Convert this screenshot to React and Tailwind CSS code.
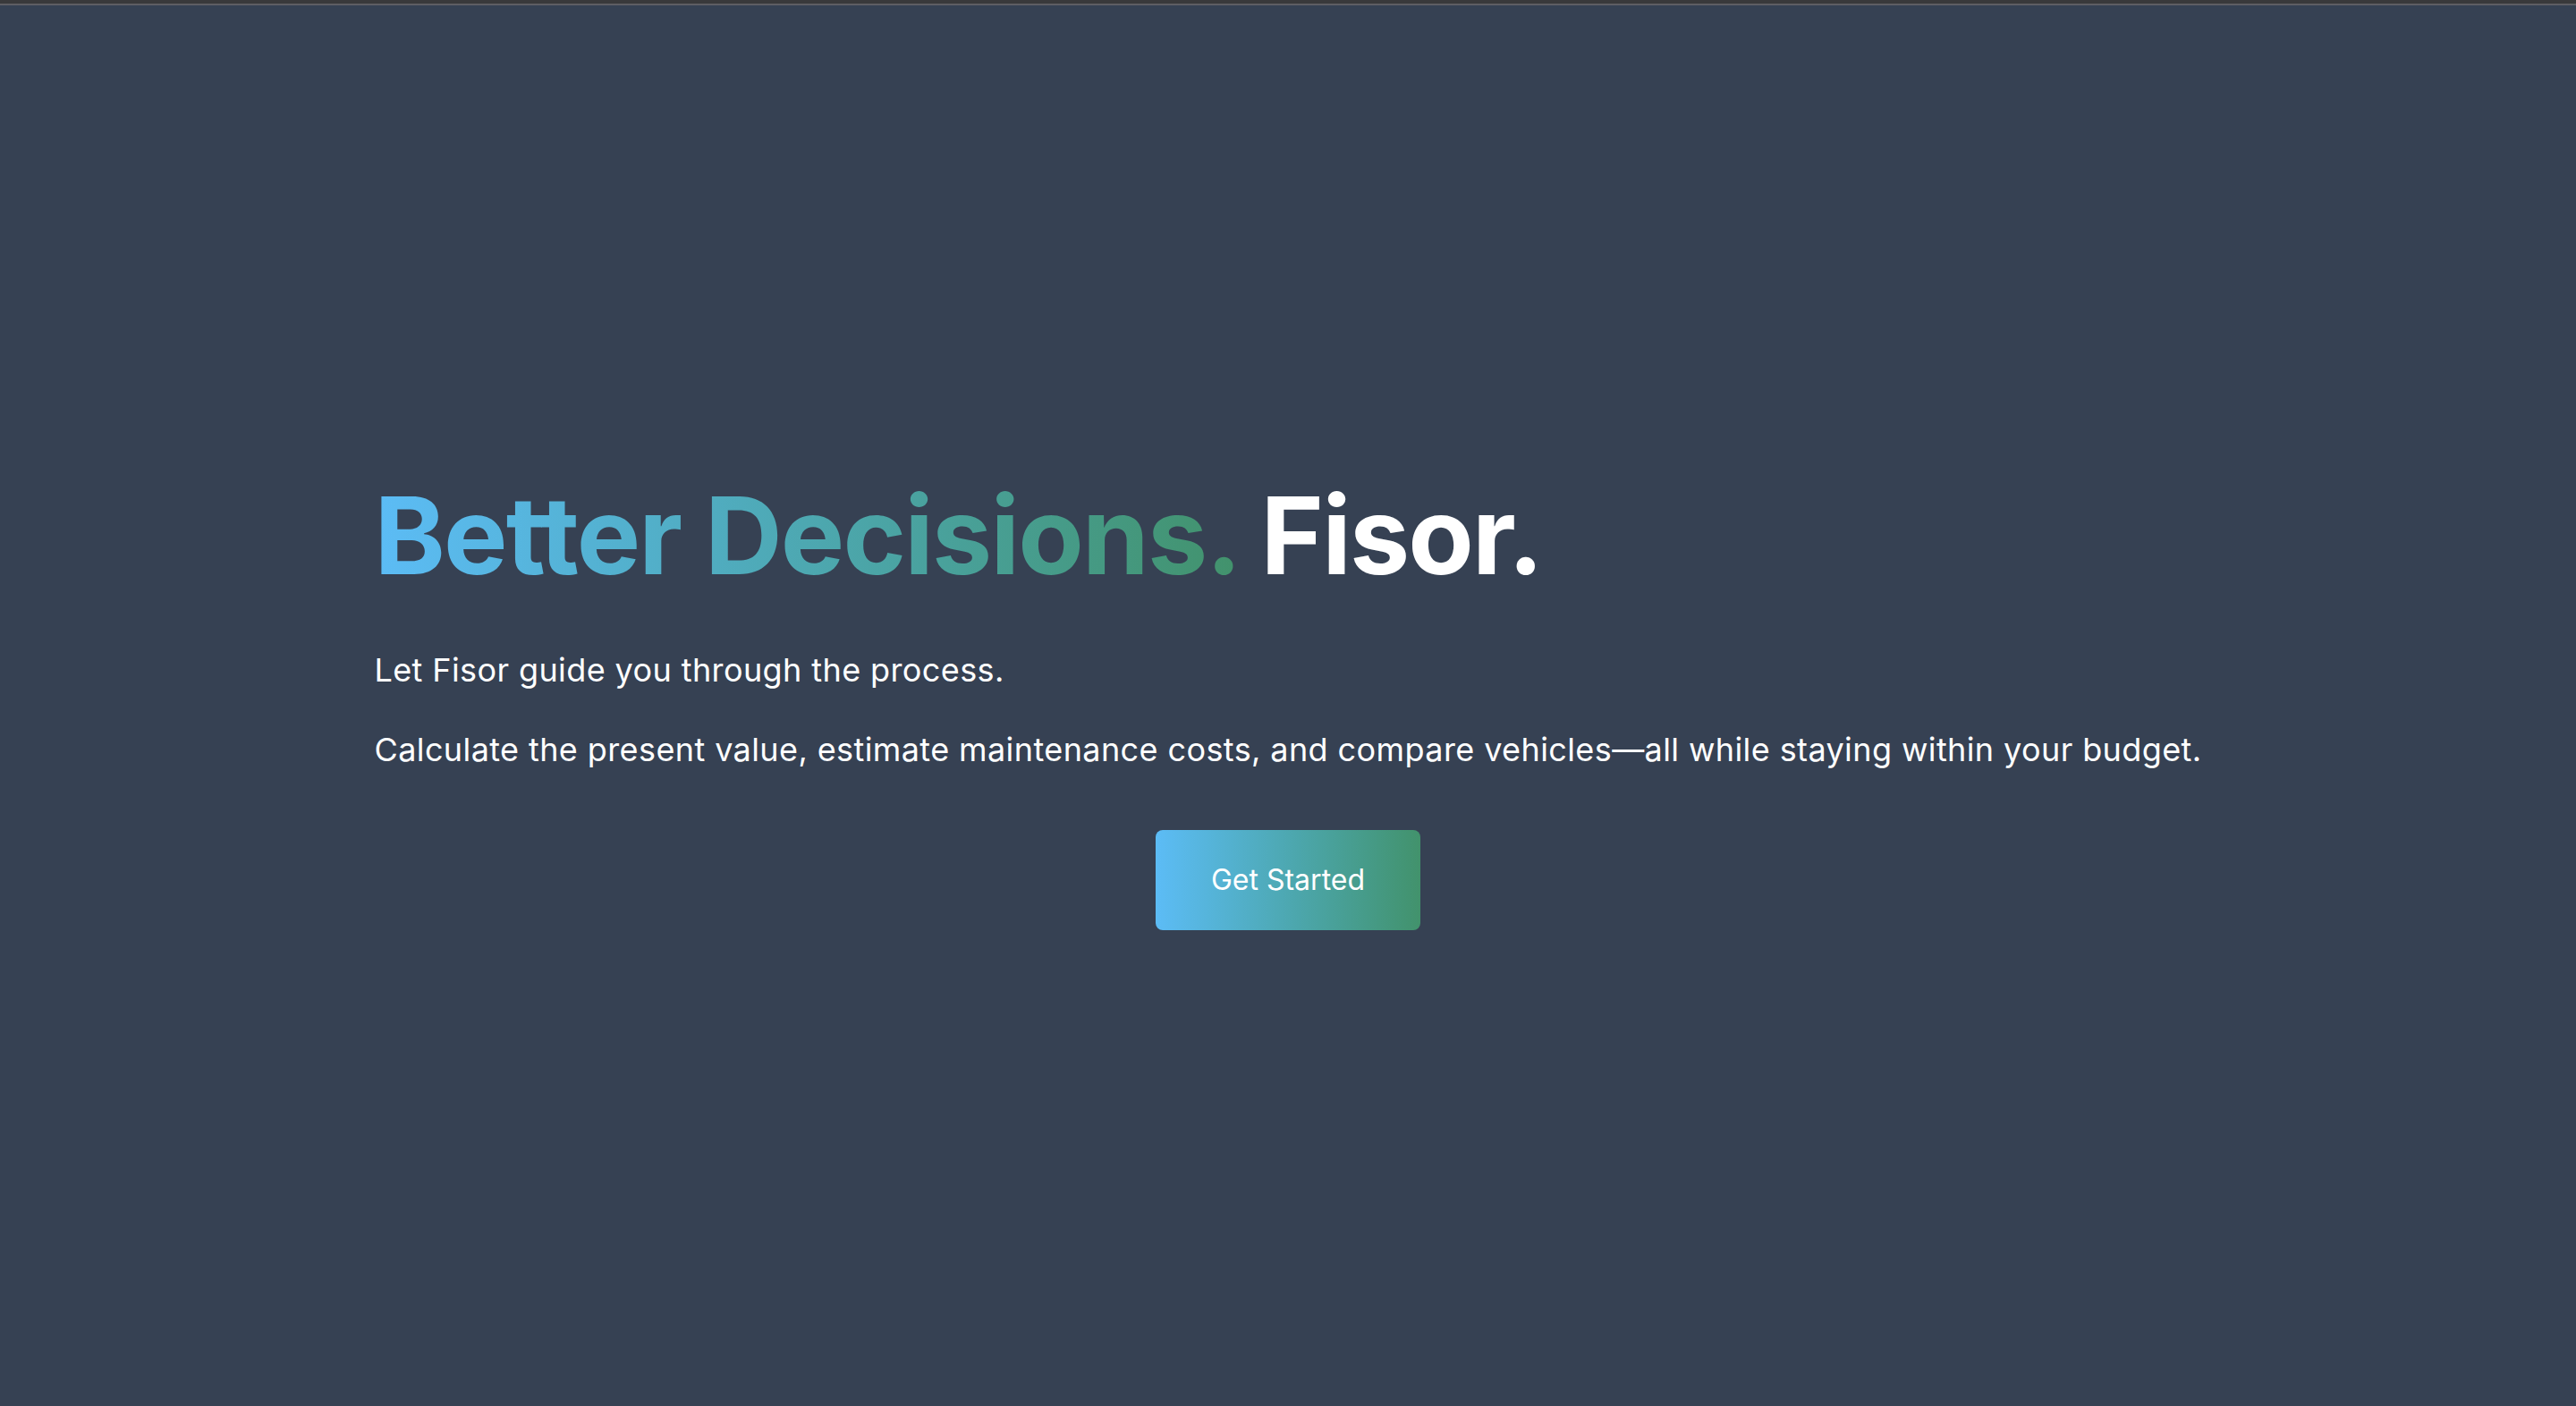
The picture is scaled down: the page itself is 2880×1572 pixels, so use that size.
import React from 'react';

function Hero() {
  return (
    <main className="flex flex-1 items-center justify-center">
      <div className="flex w-fit flex-col">
        {/* Headline */}
        <h1 className="text-[120px] font-bold leading-none tracking-[-1.8px]">
          <span className="bg-gradient-to-r from-[#5cbcf6] to-[#42926c] bg-clip-text text-transparent">
            Better Decisions.
          </span>{' '}
          <span className="text-white">Fisor.</span>
        </h1>

        {/* Copy */}
        <p className="mt-[62px] text-[36px] leading-[56px] tracking-[0.4px] text-white">
          Let Fisor guide you through the process.
        </p>
        <p className="mt-[33px] text-[36px] leading-[56px] tracking-[0.4px] text-white">
          Calculate the present value, estimate maintenance costs, and compare vehicles—all while staying within your budget.
        </p>

        {/* CTA */}
        <button className="mt-[62px] self-center rounded-[8px] bg-gradient-to-r from-[#5cbcf6] to-[#42926c] px-[62px] py-[32px] text-[32px] font-normal leading-[48px] text-white">
          Get Started
        </button>
      </div>
    </main>
  );
}

export default function App() {
  return (
    <div className="flex min-h-screen flex-col bg-[#364153] font-['Inter','Noto_Sans',sans-serif]">
      <div className="h-[4px] bg-[#39393b]" />
      <div className="h-[2px] bg-[#5e5e63]" />
      <Hero />
    </div>
  );
}
